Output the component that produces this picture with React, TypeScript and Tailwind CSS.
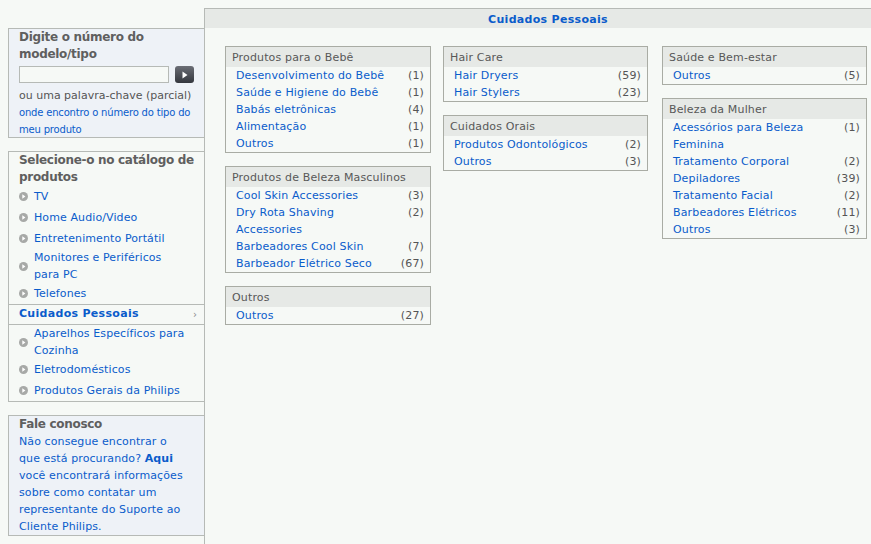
import React from 'react';

type Item = { label: React.ReactNode; count?: number };
type Group = { title: string; items: Item[] };

const columns: Group[][] = [
    [
        {
            title: 'Produtos para o Bebê',
            items: [
                { label: 'Desenvolvimento do Bebê', count: 1 },
                { label: 'Saúde e Higiene do Bebê', count: 1 },
                { label: 'Babás eletrônicas', count: 4 },
                { label: 'Alimentação', count: 1 },
                { label: 'Outros', count: 1 },
            ],
        },
        {
            title: 'Produtos de Beleza Masculinos',
            items: [
                { label: 'Cool Skin Accessories', count: 3 },
                { label: <>Dry Rota Shaving<br />Accessories</>, count: 2 },
                { label: 'Barbeadores Cool Skin', count: 7 },
                { label: 'Barbeador Elétrico Seco', count: 67 },
            ],
        },
        {
            title: 'Outros',
            items: [{ label: 'Outros', count: 27 }],
        },
    ],
    [
        {
            title: 'Hair Care',
            items: [
                { label: 'Hair Dryers', count: 59 },
                { label: 'Hair Stylers', count: 23 },
            ],
        },
        {
            title: 'Cuidados Orais',
            items: [
                { label: 'Produtos Odontológicos', count: 2 },
                { label: 'Outros', count: 3 },
            ],
        },
    ],
    [
        {
            title: 'Saúde e Bem-estar',
            items: [{ label: 'Outros', count: 5 }],
        },
        {
            title: 'Beleza da Mulher',
            items: [
                { label: <>Acessórios para Beleza<br />Feminina</>, count: 1 },
                { label: 'Tratamento Corporal', count: 2 },
                { label: 'Depiladores', count: 39 },
                { label: 'Tratamento Facial', count: 2 },
                { label: 'Barbeadores Elétricos', count: 11 },
                { label: 'Outros', count: 3 },
            ],
        },
    ],
];

const navBefore: React.ReactNode[] = [
    'TV',
    'Home Audio/Video',
    'Entretenimento Portátil',
    <>Monitores e Periféricos<br />para PC</>,
    'Telefones',
];

const navAfter: React.ReactNode[] = [
    <>Aparelhos Específicos para<br />Cozinha</>,
    'Eletrodomésticos',
    'Produtos Gerais da Philips',
];

const Bullet = () => (
    <svg width="9" height="9" viewBox="0 0 9 9" className="shrink-0">
        <circle cx="4.5" cy="4.5" r="4.5" fill="#a7a9a7" />
        <path d="M3.3 2.2 L6.4 4.5 L3.3 6.8 Z" fill="#ffffff" />
    </svg>
);

const NavItem = ({ children }: { children: React.ReactNode }) => (
    <div className="flex min-h-[21px] items-center pl-[10px]">
        <Bullet />
        <span className="ml-[6px] leading-[17px] tracking-[0.1px] text-[#0a5ccb]">{children}</span>
    </div>
);

const CategoryBox = ({ group }: { group: Group }) => (
    <div className="border border-[#a9aca4] tracking-[0.15px]">
        <div className="h-[20px] bg-[#e6e9e6] pl-[6px] leading-[21px] text-[#585858]">{group.title}</div>
        {group.items.map((item, i) => (
            <div key={i} className="flex items-start justify-between pl-[10px] pr-[6px] leading-[17px]">
                <span className="text-[#0a5ccb]">{item.label}</span>
                {item.count !== undefined && <span className="text-[#555555]">({item.count})</span>}
            </div>
        ))}
    </div>
);

export default function App() {
    return (
        <div className="h-[544px] w-[871px] overflow-hidden bg-[#f6f9f6] font-['DejaVu_Sans',Verdana,sans-serif] text-[11px]">
            <div className="flex items-start pt-2">
                {/* Sidebar */}
                <div className="ml-2 mt-5 w-[196px] shrink-0">
                    <div className="h-[110px] border border-r-0 border-[#b6bab6] bg-[#eef2f7] pl-[10px]">
                        <div className="whitespace-nowrap text-[12px] font-bold leading-[17px] tracking-[-0.3px] text-[#5f5f5f]">
                            Digite o número do<br />modelo/tipo
                        </div>
                        <div className="mt-[3px] flex items-start">
                            <div className="h-[17px] w-[150px] border border-[#b6bab6] bg-[#f6f9f6]" />
                            <button className="ml-[6px] flex h-[17px] w-[19px] items-center justify-center rounded-[3px] bg-gradient-to-b from-[#6b6e76] to-[#34373e]">
                                <svg width="6" height="8" viewBox="0 0 6 8">
                                    <path d="M0.5 0.5 L5.5 4 L0.5 7.5 Z" fill="#ffffff" />
                                </svg>
                            </button>
                        </div>
                        <div className="mt-[4px] leading-[17px] text-[#555555]">ou uma palavra-chave (parcial)</div>
                        <div className="whitespace-nowrap text-[10px] leading-[17px] tracking-[-0.18px] text-[#0a5ccb]">
                            onde encontro o número do tipo do<br />meu produto
                        </div>
                    </div>

                    <div className="mt-[13px] border border-r-0 border-[#b6bab6]">
                        <div className="whitespace-nowrap pl-[10px] text-[12px] font-bold leading-[17px] tracking-[-0.3px] text-[#5f5f5f]">
                            Selecione-o no catálogo de<br />produtos
                        </div>
                        {navBefore.map((n, i) => (
                            <NavItem key={i}>{n}</NavItem>
                        ))}
                        <div className="flex h-[21px] items-center justify-between border-y border-[#b6bab6] pl-[10px] pr-[7px]">
                            <span className="font-bold tracking-[0.3px] text-[#0a5ccb]">Cuidados Pessoais</span>
                            <span className="text-[10px] text-[#8a8a8a]">›</span>
                        </div>
                        {navAfter.map((n, i) => (
                            <NavItem key={i}>{n}</NavItem>
                        ))}
                    </div>

                    <div className="mt-[13px] border border-r-0 border-[#b6bab6] bg-[#eef2f7] pl-[10px] leading-[17px]">
                        <div className="text-[12px] font-bold tracking-[-0.3px] text-[#5f5f5f]">Fale conosco</div>
                        <div className="whitespace-nowrap tracking-[0.1px] text-[#0a5ccb]">
                            Não consegue encontrar o<br />
                            que está procurando? <span className="font-bold">Aqui</span><br />
                            você encontrará informações<br />
                            sobre como contatar um<br />
                            representante do Suporte ao<br />
                            Cliente Philips.
                        </div>
                    </div>
                </div>

                {/* Main panel */}
                <div className="h-[536px] w-[687px] shrink-0 border-l border-t border-[#b6bab6]">
                    <div className="h-[19px] bg-[#e6e9e6] text-center font-bold leading-[21px] tracking-[0.3px] text-[#0a5ccb]">
                        Cuidados Pessoais
                    </div>
                    <div className="flex items-start pl-[20px] pt-[18px]">
                        <div className="flex w-[206px] flex-col gap-[13px]">
                            {columns[0].map((g, i) => <CategoryBox key={i} group={g} />)}
                        </div>
                        <div className="ml-[12px] flex w-[205px] flex-col gap-[13px]">
                            {columns[1].map((g, i) => <CategoryBox key={i} group={g} />)}
                        </div>
                        <div className="ml-[14px] flex w-[205px] flex-col gap-[13px]">
                            {columns[2].map((g, i) => <CategoryBox key={i} group={g} />)}
                        </div>
                    </div>
                </div>
            </div>
        </div>
    );
}
